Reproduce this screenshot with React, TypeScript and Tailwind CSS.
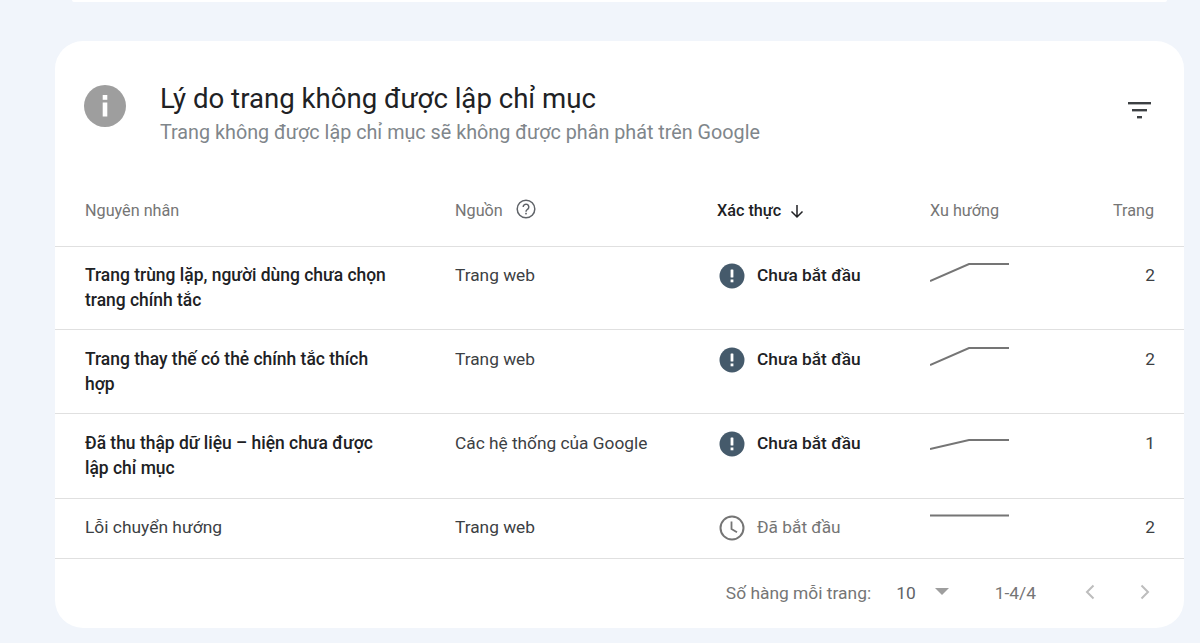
import React from "react";

const Trend = ({ d }: { d: string }) => (
  <svg width="80" height="20" viewBox="0 0 80 20" fill="none" className="block">
    <path d={d} stroke="#757575" strokeWidth="2" />
  </svg>
);

const Alert = () => (
  <svg width="26" height="26" viewBox="0 0 26 26" className="shrink-0">
    <circle cx="13" cy="13" r="12.5" fill="#455a6b" />
    <rect x="11.6" y="6.5" width="2.8" height="8" fill="#fff" rx="0.5" />
    <rect x="11.6" y="16.5" width="2.8" height="2.8" fill="#fff" />
  </svg>
);

const Clock = () => (
  <svg width="26" height="26" viewBox="0 0 26 26" fill="none" className="shrink-0">
    <circle cx="13" cy="13" r="11.5" stroke="#757575" strokeWidth="2" />
    <path d="M12.5 6.5V14l5.5 3.2" stroke="#757575" strokeWidth="1.8" />
  </svg>
);

type Row = {
  name: string;
  strong: boolean;
  source: string;
  ok: boolean;
  trend: string;
  pages: number;
  h: string;
  pt: string;
  trendClass: string;
};

const rows: Row[] = [
  { name: "Trang trùng lặp, người dùng chưa chọn trang chính tắc", strong: true, source: "Trang web", ok: false, trend: "M0 18 L39 1 H79", pages: 2, h: "h-[83px]", pt: "pt-[16px]", trendClass: "pt-[16px]" },
  { name: "Trang thay thế có thẻ chính tắc thích hợp", strong: true, source: "Trang web", ok: false, trend: "M0 18 L39 1 H79", pages: 2, h: "h-[84px]", pt: "pt-[17px]", trendClass: "pt-[16px]" },
  { name: "Đã thu thập dữ liệu – hiện chưa được lập chỉ mục", strong: true, source: "Các hệ thống của Google", ok: false, trend: "M0 11 L39 2 H79", pages: 1, h: "h-[85px]", pt: "pt-[17px]", trendClass: "pt-[23px]" },
  { name: "Lỗi chuyển hướng", strong: false, source: "Trang web", ok: true, trend: "M0 2.500 H79", pages: 2, h: "h-[60px]", pt: "pt-[16px]", trendClass: "pt-[14px]" },
];

const cols = "grid grid-cols-[370px_262px_213px_80px_1fr] pl-[30px] pr-[30px]";

export default function App() {
  return (
    <div className="h-[643px] w-[1200px] overflow-hidden bg-[#f1f5fb] font-['Roboto',sans-serif]">
      <div className="ml-[72px] mr-[33px] h-[2px] rounded-b-[20px] bg-white" />
      <div className="ml-[55px] mt-[39px] h-[587px] w-[1129px] rounded-[28px] bg-white">
        <div className="flex h-[125px] items-start justify-between pl-[29px] pr-[32px] pt-[44px]">
          <div className="flex">
            <svg width="42" height="42" viewBox="0 0 42 42" className="shrink-0">
              <circle cx="21" cy="21" r="21" fill="#9e9e9e" />
              <rect x="18.7" y="10" width="4.6" height="4.8" fill="#fff" />
              <rect x="18.7" y="17.5" width="4.6" height="14" fill="#fff" />
            </svg>
            <div className="ml-[34px] -mt-[3px]">
              <div className="text-[27.6px] leading-[34px] text-[#202124]">Lý do trang không được lập chỉ mục</div>
              <div className="mt-[4px] text-[19.75px] leading-[26px] text-[#80868b]">
                Trang không được lập chỉ mục sẽ không được phân phát trên Google
              </div>
            </div>
          </div>
          <svg width="24" height="18" viewBox="0 0 24 18" className="mt-[17px]">
            <rect x="0" y="0" width="23" height="2.4" fill="#3c4043" />
            <rect x="4" y="7" width="15" height="2.4" fill="#3c4043" />
            <rect x="9" y="14" width="5" height="2.4" fill="#3c4043" />
          </svg>
        </div>

        <div className={`${cols} h-[81px] items-center border-b border-[#e0e0e0] pt-[11px] text-[16.2px] text-[#757575]`}>
          <div>Nguyên nhân</div>
          <div className="flex items-center gap-[13px]">
            Nguồn
            <svg width="20" height="20" viewBox="0 0 20 20" fill="none" className="-mt-[4px]">
              <circle cx="10" cy="10" r="8.8" stroke="#5f6368" strokeWidth="1.5" />
              <path d="M7.2 8a2.8 2.800 0 1 1 4.600 2.100c-1 .9-1.800 1.300-1.800 2.600" stroke="#5f6368" strokeWidth="1.5" />
              <rect x="9.2" y="13.8" width="1.6" height="1.6" fill="#5f6368" />
            </svg>
          </div>
          <div className="flex items-center gap-[8px] font-[480] text-[#202124]">
            Xác thực
            <svg width="16" height="16" viewBox="0 0 16 16" fill="none">
              <path d="M8 2v12M2.500 8.500 8 14l5.500-5.500" stroke="#202124" strokeWidth="1.5" />
            </svg>
          </div>
          <div>Xu hướng</div>
          <div className="text-right">Trang</div>
        </div>

        {rows.map((r) => (
          <div key={r.name} className={`${cols} ${r.h} ${r.pt} border-b border-[#e0e0e0] text-[17.3px] leading-[25px]`}>
            <div className={`w-[310px] ${r.strong ? "text-[17.45px] font-[480] text-[#202124]" : "text-[17.4px] text-[#3c4043]"}`}>{r.name}</div>
            <div className="text-[#3c4043]">{r.source}</div>
            <div className={`flex h-[25px] items-center gap-[12px] pl-[2px] ${r.ok ? "text-[#757575]" : "font-[480] text-[#202124]"}`}>
              {r.ok ? <Clock /> : <Alert />}
              {r.ok ? "Đã bắt đầu" : "Chưa bắt đầu"}
            </div>
            <div className={`-mt-[16px] ${r.trendClass}`}>
              <Trend d={r.trend} />
            </div>
            <div className="-mr-[1px] text-right text-[#3c4043]">{r.pages}</div>
          </div>
        ))}

        <div className="flex h-[68px] items-center justify-end pr-[33px] text-[17.4px] text-[#757575]">
          <span>Số hàng mỗi trang:</span>
          <span className="ml-[25px] text-[#5f6368]">10</span>
          <svg width="14" height="7" viewBox="0 0 14 7" className="ml-[19px] -mt-[4px]">
            <path d="M0 0h14L7 7z" fill="#9e9e9e" />
          </svg>
          <span className="ml-[46px]">1-4/4</span>
          <svg width="12" height="16" viewBox="0 0 12 16" fill="none" className="ml-[48px] -mt-[3px]">
            <path d="M9.500 1.500 3 8l6.500 6.500" stroke="#bdbdbd" strokeWidth="2" />
          </svg>
          <svg width="12" height="16" viewBox="0 0 12 16" fill="none" className="ml-[43px] -mt-[3px]">
            <path d="M2.500 1.500 9 8l-6.500 6.500" stroke="#bdbdbd" strokeWidth="2" />
          </svg>
        </div>
      </div>
    </div>
  );
}
